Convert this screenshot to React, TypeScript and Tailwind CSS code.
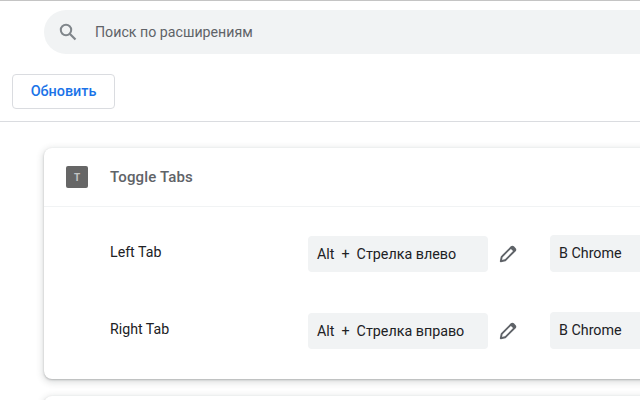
import React from "react";

function Pencil() {
  return (
    <svg width="20" height="20" viewBox="0 0 20 20" fill="none" className="shrink-0">
      <path d="M2.8 17.2l.9-4.4L13.5 3a1.2 1.2 0 0 1 1.7 0l1.8 1.8a1.2 1.2 0 0 1 0 1.7L7.2 16.3 2.8 17.2z" stroke="#5f6368" strokeWidth="1.9" strokeLinejoin="round" />
      <path d="M12.2 4.2l3.6 3.6 1.3-1.3a1.2 1.2 0 0 0 0-1.7L15.3 3a1.2 1.2 0 0 0-1.7 0z" fill="#5f6368" />
    </svg>
  );
}

function Row({ label, keyName }: { label: string; keyName: string }) {
  return (
    <div className="flex h-[77px] items-start">
      <div className="w-[264px] shrink-0 pl-[66px] pt-[6px] text-[14.2px] leading-[20px] text-[#202124]">{label}</div>
      <div className="flex h-[36px] w-[180px] shrink-0 items-center rounded-[4px] bg-[#f1f3f4] pl-[9px] pt-[1px] text-[14.3px] text-[#202124]">
        <span>Alt</span>
        <span className="ml-[7px] mr-[7px]">+</span>
        <span>{keyName}</span>
      </div>
      <div className="ml-[10px] mt-[8px] w-[20px] shrink-0"><Pencil /></div>
      <div className="ml-[32px] -mt-[1px] flex h-[37px] w-[200px] shrink-0 items-center rounded-[4px] bg-[#f1f3f4] pl-[9px] text-[14.3px] text-[#202124]">
        В Chrome
      </div>
    </div>
  );
}

export default function App() {
  return (
    <div className="h-[400px] w-[640px] overflow-hidden bg-white font-['Roboto',sans-serif]">
      <div className="h-px bg-[#c4c4c4]" />
      <div className="pl-[44px] pt-[9px]">
        <div className="flex h-[44px] w-[700px] items-center rounded-l-[22px] bg-[#f1f3f4] pl-[14px]">
          <svg width="20" height="20" viewBox="0 0 20 20" fill="none" className="shrink-0">
            <circle cx="8" cy="8" r="5.2" stroke="#80868b" strokeWidth="2" />
            <path d="M12 12l5.5 5.5" stroke="#80868b" strokeWidth="2.2" />
          </svg>
          <span className="ml-[17px] pt-[1px] text-[14.2px] text-[#5f6368]">Поиск по расширениям</span>
        </div>
      </div>
      <div className="pl-[12px] pt-[20px]">
        <button className="h-[35px] w-[103px] rounded-[4px] border border-[#dadce0] bg-white text-[14.4px] font-medium text-[#1a73e8]">Обновить</button>
      </div>
      <div className="mt-[12px] h-px bg-[#dadce0]" />
      <div className="pl-[44px] pt-[26px]">
        <div className="h-[231px] w-[700px] rounded-[8px] bg-white shadow-[0_1px_2px_rgba(60,64,67,0.3),0_2px_6px_2px_rgba(60,64,67,0.15)]">
          <div className="flex h-[59px] items-center border-b border-[#f1f3f4] pl-[22px]">
            <div className="flex h-[22px] w-[22px] items-center justify-center rounded-[2px] bg-[#666666] text-[10px] font-bold text-[#c4c4c4]">T</div>
            <div className="ml-[22px] pt-[1px] text-[15px] font-medium tracking-[0.15px] text-[#5f6368]">Toggle Tabs</div>
          </div>
          <div className="pt-[29px]">
            <Row label="Left Tab" keyName="Стрелка влево" />
            <Row label="Right Tab" keyName="Стрелка вправо" />
          </div>
        </div>
        <div className="mt-[17px] h-[60px] w-[700px] rounded-[8px] bg-white shadow-[0_1px_2px_rgba(60,64,67,0.3),0_2px_6px_2px_rgba(60,64,67,0.15)]" />
      </div>
    </div>
  );
}
